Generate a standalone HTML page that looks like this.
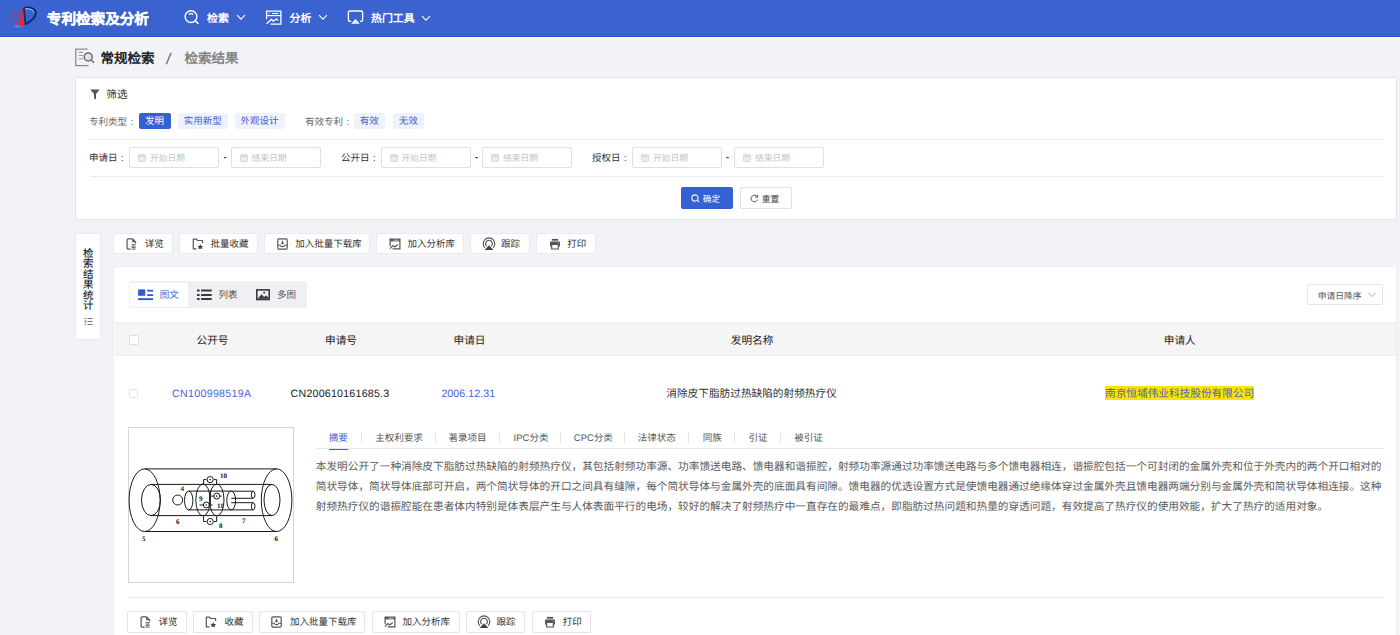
<!DOCTYPE html>
<html lang="zh-CN"><head><meta charset="utf-8">
<style>
*{box-sizing:border-box;margin:0;padding:0}
html,body{width:1400px;height:635px;overflow:hidden}
body{position:relative;text-rendering:geometricPrecision;background:#f2f3f7;font-family:"Liberation Sans",sans-serif;color:#333}
.a{position:absolute}
.t{position:absolute;white-space:nowrap;line-height:1}
#hdr{left:0;top:0;width:1400px;height:37px;background:#3a63d0;border-bottom:1px solid #2f58c9}
.nav{color:#fff;font-weight:bold;font-size:10.9px}
.card{position:absolute;background:#fff;border:1px solid #e4e6ec;border-radius:3px}
.lbl{font-size:9.5px;color:#666}
.lbl2{font-size:9.5px;color:#333}
.tag{position:absolute;height:16px;top:113px;border-radius:2px;background:#edf2fd;color:#3a63d0;font-size:9.5px;line-height:17.4px;text-align:center}
.tag.on{background:#3560d4;color:#fff}
.hr{position:absolute;height:1px;background:#ebedf2}
.inp{position:absolute;top:147px;width:90px;height:21px;border:1px solid #dcdfe6;border-radius:2px;background:#fff}
.inp .ph{position:absolute;left:20px;top:5.5px;font-size:8.75px;color:#c0c4cc;line-height:1;white-space:nowrap}
.inp svg{position:absolute;left:8px;top:6px}
.dash{position:absolute;top:152px;font-size:9px;color:#222;font-weight:bold}
.btn{position:absolute;height:21px;background:#fff;border:1px solid #e3e5ea;border-radius:2px;font-size:9.5px;color:#333}
.btn .tx{position:absolute;top:5px;line-height:1;white-space:nowrap}
.btn svg{position:absolute}
.cl{display:inline-block;width:9.5px;text-align:center}
.th{font-size:10.67px;color:#222}
.td{font-size:10.67px}
.tab{top:433.9px;font-size:9.5px;color:#555}
.sep{position:absolute;top:432px;width:1px;height:11px;background:#e2e4e8}
.abs{font-size:10.67px;line-height:20px;color:#5a5a5a;white-space:nowrap}
</style></head><body>

<!-- header -->
<div id="hdr" class="a">
 <svg class="a" style="left:5px;top:3px" width="36" height="28" viewBox="0 0 36 28">
  <ellipse cx="14" cy="23.3" rx="5" ry="1.4" fill="#9fc0f5" opacity=".3"/>
  <g fill="#ff2020"><circle cx="13" cy="7.3" r="0.8" opacity=".8"/><circle cx="8.8" cy="10.6" r="1.1"/><circle cx="12.8" cy="12.6" r="1.4"/><circle cx="6.4" cy="15.7" r="1.3"/><circle cx="11.5" cy="19.4" r="1.4"/></g>
  <path d="M17.4 3.2 L14.5 23.3 L18.8 23.3 Z" fill="#ff1e1e"/>
  <path d="M18.9 4.8 L20.6 21.8" stroke="#102a66" stroke-width="1.7"/>
  <path d="M19.6 4.6 C25 3.8 30.8 5.6 30.8 10 C30.8 14.2 25.5 18.5 20.8 21" fill="none" stroke="#10286a" stroke-width="2"/>
  <path d="M20.4 5.9 C24.5 5.3 28.6 6.6 29 9.6" fill="none" stroke="#c8d8fa" stroke-width="1"/>
 </svg>
 <div class="t" style="left:46.8px;top:12.5px;font-size:14.6px;font-weight:bold;color:#fff;-webkit-text-stroke:.3px #fff">专利检索及分析</div>

 <svg class="a" style="left:180px;top:8px" width="24" height="20" viewBox="0 0 24 20">
  <circle cx="11" cy="8.6" r="5.9" fill="none" stroke="#fff" stroke-width="1.4"/>
  <path d="M9 6.3 Q11 5 13 6.3" fill="none" stroke="#fff" stroke-width="1.1" stroke-linecap="round"/>
  <path d="M15.4 13 L18 15.4" stroke="#fff" stroke-width="1.5" stroke-linecap="round"/>
 </svg>
 <div class="t nav" style="left:207px;top:14px">检索</div>
 <svg class="a" style="left:235.5px;top:14px" width="10" height="7" viewBox="0 0 10 7"><path d="M1 1.2 L5 5.2 L9 1.2" fill="none" stroke="#fff" stroke-width="1.1"/></svg>

 <svg class="a" style="left:262px;top:8px" width="24" height="20" viewBox="0 0 24 20">
  <path d="M4.6 11.3 V3.1 H18.9 V16.2 H8.5" fill="none" stroke="#fff" stroke-width="1.3"/>
  <path d="M4.6 7.6 H18.9" stroke="#fff" stroke-width="1.2"/>
  <path d="M10 5.5 H16.4" stroke="#fff" stroke-width="1"/>
  <circle cx="7.2" cy="5.5" r=".5" fill="#fff"/>
  <path d="M5 15.4 L9.4 11.3 L11.3 13.2 L14.5 11 L15.7 12" fill="none" stroke="#fff" stroke-width="1.3" stroke-linecap="round" stroke-linejoin="round"/>
 </svg>
 <div class="t nav" style="left:289.5px;top:14px">分析</div>
 <svg class="a" style="left:317.5px;top:14px" width="10" height="7" viewBox="0 0 10 7"><path d="M1 1.2 L5 5.2 L9 1.2" fill="none" stroke="#fff" stroke-width="1.1"/></svg>

 <svg class="a" style="left:344px;top:8px" width="24" height="20" viewBox="0 0 24 20">
  <path d="M7.2 13.4 H6 Q4.4 13.4 4.4 11.8 V4.6 Q4.4 3 6 3 H17 Q18.6 3 18.6 4.6 V11.8 Q18.6 13.4 17 13.4 H16" fill="none" stroke="#fff" stroke-width="1.3"/>
  <path d="M11.5 11 L15.8 15.7 H7.2 Z" fill="#fff"/>
  <path d="M11.5 13.2 L12.3 14.3 H10.7 Z" fill="#3a63d0"/>
 </svg>
 <div class="t nav" style="left:371px;top:13.8px">热门工具</div>
 <svg class="a" style="left:420.5px;top:14.5px" width="10" height="7" viewBox="0 0 10 7"><path d="M1 1.2 L5 5.2 L9 1.2" fill="none" stroke="#fff" stroke-width="1.1"/></svg>
</div>
<div class="a" style="left:0;top:37px;width:1400px;height:1.6px;background:#f9fafc"></div>

<!-- breadcrumb -->
<svg class="a" style="left:74px;top:47px" width="22" height="20" viewBox="0 0 22 20">
 <path d="M13.6 2 H1.8 V18.5 H14.6" fill="none" stroke="#8c8c8c" stroke-width="1.25"/>
 <path d="M4.8 5.4 H9.1 M4.8 8.5 H9.1 M4.8 11.7 H9.1" stroke="#9a9a9a" stroke-width="1.1"/>
 <circle cx="14.2" cy="9.9" r="4" fill="#e2e2e4" stroke="#6f6f6f" stroke-width="1.5"/>
 <path d="M17 12.8 L20 15.8" stroke="#6f6f6f" stroke-width="1.6"/>
</svg>
<div class="t" style="left:100.5px;top:52.3px;font-size:13.5px;font-weight:bold;color:#222">常规检索</div>
<svg class="a" style="left:160px;top:48px" width="16" height="20" viewBox="0 0 16 20"><path d="M11 4.9 L6.3 16.2" stroke="#7a7a7a" stroke-width="1.5"/></svg>
<div class="t" style="left:184.4px;top:52.3px;font-size:13.5px;color:#858585;font-weight:bold">检索结果</div>

<!-- filter card -->
<div class="card" style="left:75.2px;top:77.2px;width:1321.8px;height:143px"></div>
<svg class="a" style="left:89.5px;top:88.5px" width="10" height="11" viewBox="0 0 10 11"><path d="M0.3 0.5 H9.7 L6 5 V10.5 L4 9.3 V5 Z" fill="#555"/></svg>
<div class="t" style="left:106.3px;top:90.2px;font-size:10.67px;color:#333">筛选</div>

<div class="t lbl" style="left:89px;top:117.9px">专利类型<span class="cl">:</span></div>
<div class="tag on" style="left:138.5px;width:32px">发明</div>
<div class="tag" style="left:177.5px;width:50.5px">实用新型</div>
<div class="tag" style="left:234.5px;width:50px">外观设计</div>
<div class="t lbl" style="left:305px;top:117.9px">有效专利<span class="cl">:</span></div>
<div class="tag" style="left:353.5px;width:31.5px">有效</div>
<div class="tag" style="left:392.5px;width:31.5px">无效</div>
<div class="hr" style="left:89.5px;top:139px;width:1293px"></div>

<div class="t lbl2" style="left:89px;top:153.7px">申请日<span class="cl">:</span></div>
<div class="inp" style="left:129px"><svg width="8" height="8" viewBox="0 0 8 8"><rect x=".6" y=".6" width="6.8" height="6.8" rx=".8" fill="#eeeff2" stroke="#cfd1d6" stroke-width=".9"/><path d="M.6 2.4H7.4" stroke="#cfd1d6" stroke-width="1.1"/></svg><span class="ph">开始日期</span></div>
<div class="dash" style="left:223.5px">-</div>
<div class="inp" style="left:230.5px"><svg width="8" height="8" viewBox="0 0 8 8"><rect x=".6" y=".6" width="6.8" height="6.8" rx=".8" fill="#eeeff2" stroke="#cfd1d6" stroke-width=".9"/><path d="M.6 2.4H7.4" stroke="#cfd1d6" stroke-width="1.1"/></svg><span class="ph">结束日期</span></div>
<div class="t lbl2" style="left:341px;top:153.7px">公开日<span class="cl">:</span></div>
<div class="inp" style="left:380.5px"><svg width="8" height="8" viewBox="0 0 8 8"><rect x=".6" y=".6" width="6.8" height="6.8" rx=".8" fill="#eeeff2" stroke="#cfd1d6" stroke-width=".9"/><path d="M.6 2.4H7.4" stroke="#cfd1d6" stroke-width="1.1"/></svg><span class="ph">开始日期</span></div>
<div class="dash" style="left:475px">-</div>
<div class="inp" style="left:482px"><svg width="8" height="8" viewBox="0 0 8 8"><rect x=".6" y=".6" width="6.8" height="6.8" rx=".8" fill="#eeeff2" stroke="#cfd1d6" stroke-width=".9"/><path d="M.6 2.4H7.4" stroke="#cfd1d6" stroke-width="1.1"/></svg><span class="ph">结束日期</span></div>
<div class="t lbl2" style="left:592px;top:153.7px">授权日<span class="cl">:</span></div>
<div class="inp" style="left:632px"><svg width="8" height="8" viewBox="0 0 8 8"><rect x=".6" y=".6" width="6.8" height="6.8" rx=".8" fill="#eeeff2" stroke="#cfd1d6" stroke-width=".9"/><path d="M.6 2.4H7.4" stroke="#cfd1d6" stroke-width="1.1"/></svg><span class="ph">开始日期</span></div>
<div class="dash" style="left:726px">-</div>
<div class="inp" style="left:734px"><svg width="8" height="8" viewBox="0 0 8 8"><rect x=".6" y=".6" width="6.8" height="6.8" rx=".8" fill="#eeeff2" stroke="#cfd1d6" stroke-width=".9"/><path d="M.6 2.4H7.4" stroke="#cfd1d6" stroke-width="1.1"/></svg><span class="ph">结束日期</span></div>
<div class="hr" style="left:89.5px;top:176px;width:1293px"></div>

<div class="a" style="left:681px;top:187px;width:52px;height:21.5px;background:#3560d4;border-radius:2px"></div>
<svg class="a" style="left:690.5px;top:194px" width="9" height="9" viewBox="0 0 9 9"><circle cx="4" cy="4" r="3.1" fill="none" stroke="#fff" stroke-width="1.1"/><path d="M6.2 6.2 L8.2 8.2" stroke="#fff" stroke-width="1.1"/></svg>
<div class="t" style="left:702.7px;top:194.9px;font-size:8.75px;color:#fff">确定</div>
<div class="a" style="left:740px;top:187px;width:51.5px;height:21.5px;background:#fff;border:1px solid #dcdfe6;border-radius:2px"></div>
<svg class="a" style="left:750px;top:194px" width="9" height="9" viewBox="0 0 9 9"><path d="M7.3 3 A3.3 3.3 0 1 0 7.5 5.6" fill="none" stroke="#555" stroke-width="1"/><path d="M7.6 0.8 V3.2 H5.3" fill="none" stroke="#555" stroke-width="1"/></svg>
<div class="t" style="left:761.7px;top:194.9px;font-size:8.75px;color:#444">重置</div>

<!-- side tab -->
<div class="card" style="left:75.2px;top:232.5px;width:25.6px;height:107px;border-color:#e8eaef"></div>
<div class="a" style="left:83px;top:248.5px;width:12px;font-size:10.5px;line-height:10.5px;color:#111;-webkit-text-stroke:.1px #111">检<br>索<br>结<br>果<br>统<br>计</div>
<svg class="a" style="left:83.5px;top:316.5px" width="9" height="9" viewBox="0 0 9 9"><path d="M3.5 1.5H8.5M3.5 4.5H8.5M3.5 7.5H8.5M0.5 1.5H2M0.5 7.5H2M2.5 3 L0.6 4.5 L2.5 6" fill="none" stroke="#777" stroke-width="1"/></svg>

<!-- toolbar -->
<!--TB1-->
<div class="a" style="left:113.2px;top:232.6px;width:59.800000000000004px;height:21.6px;background:#fff;border:1px solid #e9ebf0;border-radius:2px"></div>
<div class="a" style="left:126.0px;top:237.79999999999998px;line-height:0"><svg width="11" height="12" viewBox="0 0 11 12"><path d="M4.6 11.1 H2.2 Q1.1 11.1 1.1 10 V2 Q1.1 0.9 2.2 0.9 H6.4 L9.6 4.1 V5.4" fill="none" stroke="#555" stroke-width="1.2"/><path d="M6.2 0.9 L9.6 4.3 H6.2 Z" fill="#555"/><path d="M5.6 6.6 H9.6 M5.6 8.1 H9.6 M5.6 9.6 H9.6 M5.6 11.1 H9.6" stroke="#666" stroke-width="1"/></svg></div>
<div class="t" style="left:144.8px;top:240.2px;font-size:9.5px;color:#333">详览</div>
<div class="a" style="left:178.95px;top:232.6px;width:78.7px;height:21.6px;background:#fff;border:1px solid #e9ebf0;border-radius:2px"></div>
<div class="a" style="left:191.6px;top:237.79999999999998px;line-height:0"><svg width="12" height="12" viewBox="0 0 12 12"><path d="M4.5 10.9 H1.3 V1.2 H4.4 L5.6 2.5 H10.6 V5" fill="none" stroke="#555" stroke-width="1.2" stroke-linejoin="round"/><path d="M8.3 6.2 L9.3 8 L11.1 8.3 L9.8 9.6 L10.1 11.3 L8.3 10.5 L6.5 11.3 L6.8 9.6 L5.5 8.3 L7.3 8 Z" fill="#444"/></svg></div>
<div class="t" style="left:210.4px;top:240.2px;font-size:9.5px;color:#333">批量收藏</div>
<div class="a" style="left:263.7px;top:232.6px;width:106.2px;height:21.6px;background:#fff;border:1px solid #e9ebf0;border-radius:2px"></div>
<div class="a" style="left:276.5px;top:237.79999999999998px;line-height:0"><svg width="11" height="12" viewBox="0 0 11 12"><rect x="0.8" y="0.9" width="9.4" height="10.2" rx="1.2" fill="none" stroke="#555" stroke-width="1.2"/><path d="M0.8 7.3 H3.3 Q3.6 8.6 5.5 8.6 Q7.4 8.6 7.7 7.3 H10.2" fill="none" stroke="#555" stroke-width="1.1"/><path d="M5.5 2.8 V5.2" stroke="#555" stroke-width="1.2"/><path d="M3.6 4.8 L5.5 6.8 L7.4 4.8 Z" fill="#555"/></svg></div>
<div class="t" style="left:295.2px;top:240.2px;font-size:9.5px;color:#333">加入批量下载库</div>
<div class="a" style="left:376.09999999999997px;top:232.6px;width:87.7px;height:21.6px;background:#fff;border:1px solid #e9ebf0;border-radius:2px"></div>
<div class="a" style="left:388.5px;top:237.79999999999998px;line-height:0"><svg width="12" height="12" viewBox="0 0 12 12"><path d="M1.1 8.2 V1 H10.9 V10.9 H3.6" fill="none" stroke="#555" stroke-width="1.2"/><rect x="1.1" y="1" width="9.8" height="2.4" fill="#555"/><path d="M4.6 2.2 H9.4" stroke="#e6e6e6" stroke-width=".8"/><path d="M0.9 10.6 L3.8 7.6 L5.6 8.9 L8.8 6.4" fill="none" stroke="#555" stroke-width="1.25" stroke-linejoin="round"/></svg></div>
<div class="t" style="left:407.4px;top:240.2px;font-size:9.5px;color:#333">加入分析库</div>
<div class="a" style="left:470.0px;top:232.6px;width:59.800000000000004px;height:21.6px;background:#fff;border:1px solid #e9ebf0;border-radius:2px"></div>
<div class="a" style="left:481.5px;top:237.2px;line-height:0"><svg width="14" height="14" viewBox="0 0 14 14"><path d="M3 10.9 A5.8 5.8 0 1 1 11 10.9" fill="none" stroke="#555" stroke-width="1.15"/><path d="M4.7 9.2 A3.4 3.4 0 1 1 9.3 9.2" fill="none" stroke="#555" stroke-width="1.15"/><path d="M7 8.3 L11.4 13 H2.6 Z" fill="#444"/></svg></div>
<div class="t" style="left:501.1px;top:240.2px;font-size:9.5px;color:#333">跟踪</div>
<div class="a" style="left:535.8000000000001px;top:232.6px;width:60.0px;height:21.6px;background:#fff;border:1px solid #e9ebf0;border-radius:2px"></div>
<div class="a" style="left:548.6px;top:237.79999999999998px;line-height:0"><svg width="12" height="12" viewBox="0 0 12 12"><rect x="2.8" y="0.9" width="6.4" height="1.8" fill="#555"/><path d="M1.6 3.6 H10.4 Q11 3.6 11 4.2 V8.4 H9.3 V7 H2.7 V8.4 H1 V4.2 Q1 3.6 1.6 3.6 Z" fill="#555"/><circle cx="9.3" cy="5" r=".6" fill="#ddd"/><path d="M2.7 7.2 V11 H9.3 V7.2" fill="none" stroke="#555" stroke-width="1.2"/></svg></div>
<div class="t" style="left:567.2px;top:240.2px;font-size:9.5px;color:#333">打印</div>
<!--/TB1-->


<!-- results card -->
<div class="card" style="left:113.2px;top:266.2px;width:1284px;height:380px;border-color:#eceef2;border-radius:2px"></div>
<!--RES-->
<div class="a" style="left:128.7px;top:281.3px;width:178px;height:26.5px;background:#eef0f4;border-radius:2px"></div>
<div class="a" style="left:129.8px;top:282.8px;width:58.2px;height:24.2px;background:#fff;border-radius:1px"></div>
<svg class="a" style="left:138px;top:289px" width="16" height="12" viewBox="0 0 16 12"><rect x="0.1" y="0.4" width="7.1" height="6.4" fill="#3058d5"/><rect x="9.2" y="0.8" width="5.9" height="1.8" fill="#3058d5"/><rect x="9.2" y="5.2" width="5.9" height="1.8" fill="#3058d5"/><rect x="0.1" y="9.2" width="15" height="1.9" fill="#3058d5"/></svg>
<div class="t" style="left:159.7px;top:291px;font-size:9.5px;color:#3a63d0">图文</div>
<svg class="a" style="left:197px;top:289px" width="15" height="12" viewBox="0 0 15 12"><path d="M0 1.4H2.6M0 5.9H2.6M0 10H2.6M4.1 1.4H14.7M4.1 5.9H14.7M4.1 10H14.7" stroke="#3a3a3a" stroke-width="2"/></svg>
<div class="t" style="left:218.4px;top:291px;font-size:9.5px;color:#555">列表</div>
<svg class="a" style="left:256px;top:289px" width="14" height="12" viewBox="0 0 14 12"><rect x="0.8" y="0.9" width="12.4" height="9.6" fill="none" stroke="#3a3a3a" stroke-width="1.6"/><path d="M1.6 9.8 L5.6 5.2 L8 8 L10.2 6.6 L12.4 8.5 V9.8 Z" fill="#3a3a3a"/><circle cx="8.2" cy="3.8" r="1" fill="#3a3a3a"/></svg>
<div class="t" style="left:277px;top:291px;font-size:9.5px;color:#555">多图</div>

<div class="a" style="left:1307px;top:284.2px;width:76px;height:21px;background:#fff;border:1px solid #e2e5eb;border-radius:2px"></div>
<div class="t" style="left:1317.8px;top:291.5px;font-size:8.75px;color:#555">申请日降序</div>
<svg class="a" style="left:1367.8px;top:291.8px" width="8" height="6" viewBox="0 0 8 6"><path d="M0.6 1 L3.9 4.6 L7.2 1" fill="none" stroke="#aaa" stroke-width="0.9"/></svg>

<div class="a" style="left:114.5px;top:322.3px;width:1281.5px;height:34px;background:#f5f5f6;border-top:1px solid #ebedf1;border-bottom:1px solid #ebedf1"></div>
<div class="a" style="left:129.1px;top:335.4px;width:9.8px;height:9.6px;background:#fff;border:1px solid #dcdfe6;border-radius:1.5px"></div>
<div class="t th" style="left:196.5px;top:336px">公开号</div>
<div class="t th" style="left:325px;top:336px">申请号</div>
<div class="t th" style="left:453.5px;top:336px">申请日</div>
<div class="t th" style="left:730.8px;top:336px">发明名称</div>
<div class="t th" style="left:1163.8px;top:336px">申请人</div>

<div class="a" style="left:128.6px;top:388.6px;width:9.2px;height:9.2px;background:#fff;border:1px solid #e0e2e8;border-radius:1.5px"></div>
<div class="t td" style="left:172px;top:388.5px;color:#3f66d2;letter-spacing:.3px">CN100998519A</div>
<div class="t td" style="left:290.6px;top:388.5px;color:#222;letter-spacing:.21px">CN200610161685.3</div>
<div class="t td" style="left:441.4px;top:388.5px;color:#3f66d2;letter-spacing:.05px">2006.12.31</div>
<div class="t td" style="left:666.3px;top:389px;color:#333">消除皮下脂肪过热缺陷的射频热疗仪</div>
<div class="a" style="left:1105px;top:385.8px;width:149.3px;height:14.3px;background:#ffe400"></div>
<div class="t td" style="left:1105px;top:389px;color:#4a64c0">南京恒埔伟业科技股份有限公司</div>

<div class="a" style="left:128px;top:427.3px;width:165.6px;height:155.3px;background:#fff;border:1px solid #d6d6d6"></div>
<svg class="a" style="left:128px;top:427.3px" width="166" height="156" viewBox="0 0 166 156">
 <g fill="none" stroke="#1a1a1a" stroke-width="1">
  <ellipse cx="16.6" cy="73.2" rx="15.5" ry="31.3"/>
  <ellipse cx="148.6" cy="73.2" rx="15.3" ry="31.3"/>
  <path d="M16.6 41.9 H148.6 M16.6 104.5 H148.6"/>
  <ellipse cx="23" cy="73" rx="9.5" ry="15.6"/>
  <ellipse cx="144" cy="73" rx="8" ry="15.6"/>
  <path d="M23 57.4 H144 M23 88.6 H144"/>
  <circle cx="49.7" cy="73" r="5"/>
  <ellipse cx="60.7" cy="73.5" rx="4.2" ry="9.4"/>
  <path d="M60.7 64.1 H103 M60.7 82.9 H103"/>
  <ellipse cx="75" cy="73" rx="7.2" ry="16"/>
  <ellipse cx="88.8" cy="73" rx="7.2" ry="16"/>
  <ellipse cx="103.2" cy="73.5" rx="4.4" ry="9.4"/>
  <path d="M103.2 64.2 H125.2 M103.2 71.3 H125.2 M103.2 75.7 H125.2 M103.2 82.9 H125.2"/>
  <ellipse cx="125.2" cy="67.7" rx="1.8" ry="3.5"/>
  <ellipse cx="125.2" cy="79.3" rx="1.8" ry="3.5"/>
  <path d="M75.6 57.2 V52.6 H78.5 M86 52.6 H88.6 V57.2"/>
  <circle cx="82.2" cy="52.6" r="3.1"/>
  <path d="M75.6 89.5 V94.5 H78.5 M86 94.5 H88.6 V89.5"/>
  <circle cx="82.2" cy="94.5" r="3.1"/>
  <path d="M82.2 64 V78"/>
  <circle cx="78.3" cy="78" r="3"/>
  <path d="M71.5 78 H75.3 M81.3 78 H84.5"/>
  <circle cx="88.8" cy="69.1" r="3"/>
  <path d="M82.2 69.1 H85.8 M91.8 69.1 H93.6"/>
  <g fill="#1a1a1a" stroke="none"><circle cx="82.2" cy="52.6" r=".8"/><circle cx="82.2" cy="94.5" r=".8"/><circle cx="78.3" cy="78" r=".8"/><circle cx="88.8" cy="69.1" r=".8"/></g>
 </g>
 <g fill="#111" font-family="Liberation Serif,serif" font-size="7" font-weight="bold">
  <text x="92" y="50.5">10</text><text x="52.5" y="64">4</text><text x="71" y="74">9</text><text x="89" y="80.5">11</text>
  <text x="48" y="97">6</text><text x="91" y="101">8</text><text x="114" y="96">7</text><text x="14" y="113.5">5</text><text x="146.5" y="113.5">6</text>
 </g>
</svg>

<div class="t tab" style="left:328.8px;color:#3560d4">摘要</div>
<div class="a" style="left:328.8px;top:447.8px;width:19.2px;height:2px;background:#3560d4"></div>
<div class="t tab" style="left:375.2px">主权利要求</div>
<div class="t tab" style="left:448.6px">著录项目</div>
<div class="t tab" style="left:513.6px">IPC分类</div>
<div class="t tab" style="left:573.8px">CPC分类</div>
<div class="t tab" style="left:637.8px">法律状态</div>
<div class="t tab" style="left:702.7px">同族</div>
<div class="t tab" style="left:748.5px">引证</div>
<div class="t tab" style="left:794.2px">被引证</div>
<div class="sep" style="left:360.5px"></div><div class="sep" style="left:434.6px"></div><div class="sep" style="left:499.2px"></div><div class="sep" style="left:560.2px"></div>
<div class="sep" style="left:623.7px"></div><div class="sep" style="left:688.2px"></div><div class="sep" style="left:733.9px"></div><div class="sep" style="left:780.3px"></div>
<div class="hr" style="left:315.8px;top:448px;width:1068.5px;background:#e6e8ee"></div>

<div class="a abs" style="left:315.8px;top:456.5px;width:1070px">本发明公开了一种消除皮下脂肪过热缺陷的射频热疗仪，其包括射频功率源、功率馈送电路、馈电器和谐振腔，射频功率源通过功率馈送电路与多个馈电器相连，谐振腔包括一个可封闭的金属外壳和位于外壳内的两个开口相对的<br>简状导体，简状导体底部可开启，两个简状导体的开口之间具有缝隙，每个简状导体与金属外壳的底面具有间隙。馈电器的优选设置方式是使馈电器通过绝缘体穿过金属外壳且馈电器两端分别与金属外壳和简状导体相连接。这种<br>射频热疗仪的谐振腔能在患者体内特别是体表层产生与人体表面平行的电场，较好的解决了射频热疗中一直存在的最难点，即脂肪过热问题和热量的穿透问题，有效提高了热疗仪的使用效能，扩大了热疗的适用对象。</div>

<div class="hr" style="left:128px;top:597.3px;width:1256px;background:#e6e7ea"></div>
<!--/RES-->
<!--TB2-->
<div class="a" style="left:127.2px;top:610.8px;width:59.800000000000004px;height:22.400000000000002px;background:#fff;border:1px solid #e2e4e9;border-radius:2px"></div>
<div class="a" style="left:140.0px;top:616.0px;line-height:0"><svg width="11" height="12" viewBox="0 0 11 12"><path d="M4.6 11.1 H2.2 Q1.1 11.1 1.1 10 V2 Q1.1 0.9 2.2 0.9 H6.4 L9.6 4.1 V5.4" fill="none" stroke="#555" stroke-width="1.2"/><path d="M6.2 0.9 L9.6 4.3 H6.2 Z" fill="#555"/><path d="M5.6 6.6 H9.6 M5.6 8.1 H9.6 M5.6 9.6 H9.6 M5.6 11.1 H9.6" stroke="#666" stroke-width="1"/></svg></div>
<div class="t" style="left:158.4px;top:618.4px;font-size:9.5px;color:#333">详览</div>
<div class="a" style="left:193.29999999999998px;top:610.8px;width:59.800000000000004px;height:22.400000000000002px;background:#fff;border:1px solid #e2e4e9;border-radius:2px"></div>
<div class="a" style="left:205.2px;top:616.0px;line-height:0"><svg width="12" height="12" viewBox="0 0 12 12"><path d="M4.5 10.9 H1.3 V1.2 H4.4 L5.6 2.5 H10.6 V5" fill="none" stroke="#555" stroke-width="1.2" stroke-linejoin="round"/><path d="M8.3 6.2 L9.3 8 L11.1 8.3 L9.8 9.6 L10.1 11.3 L8.3 10.5 L6.5 11.3 L6.8 9.6 L5.5 8.3 L7.3 8 Z" fill="#444"/></svg></div>
<div class="t" style="left:224.5px;top:618.4px;font-size:9.5px;color:#333">收藏</div>
<div class="a" style="left:258.8px;top:610.8px;width:106.60000000000001px;height:22.400000000000002px;background:#fff;border:1px solid #e2e4e9;border-radius:2px"></div>
<div class="a" style="left:271.3px;top:616.0px;line-height:0"><svg width="11" height="12" viewBox="0 0 11 12"><rect x="0.8" y="0.9" width="9.4" height="10.2" rx="1.2" fill="none" stroke="#555" stroke-width="1.2"/><path d="M0.8 7.3 H3.3 Q3.6 8.6 5.5 8.6 Q7.4 8.6 7.7 7.3 H10.2" fill="none" stroke="#555" stroke-width="1.1"/><path d="M5.5 2.8 V5.2" stroke="#555" stroke-width="1.2"/><path d="M3.6 4.8 L5.5 6.8 L7.4 4.8 Z" fill="#555"/></svg></div>
<div class="t" style="left:290px;top:618.4px;font-size:9.5px;color:#333">加入批量下载库</div>
<div class="a" style="left:371.5px;top:610.8px;width:88.0px;height:22.400000000000002px;background:#fff;border:1px solid #e2e4e9;border-radius:2px"></div>
<div class="a" style="left:383.5px;top:616.0px;line-height:0"><svg width="12" height="12" viewBox="0 0 12 12"><path d="M1.1 8.2 V1 H10.9 V10.9 H3.6" fill="none" stroke="#555" stroke-width="1.2"/><rect x="1.1" y="1" width="9.8" height="2.4" fill="#555"/><path d="M4.6 2.2 H9.4" stroke="#e6e6e6" stroke-width=".8"/><path d="M0.9 10.6 L3.8 7.6 L5.6 8.9 L8.8 6.4" fill="none" stroke="#555" stroke-width="1.25" stroke-linejoin="round"/></svg></div>
<div class="t" style="left:402.5px;top:618.4px;font-size:9.5px;color:#333">加入分析库</div>
<div class="a" style="left:465.5px;top:610.8px;width:59.800000000000004px;height:22.400000000000002px;background:#fff;border:1px solid #e2e4e9;border-radius:2px"></div>
<div class="a" style="left:476.9px;top:615.4px;line-height:0"><svg width="14" height="14" viewBox="0 0 14 14"><path d="M3 10.9 A5.8 5.8 0 1 1 11 10.9" fill="none" stroke="#555" stroke-width="1.15"/><path d="M4.7 9.2 A3.4 3.4 0 1 1 9.3 9.2" fill="none" stroke="#555" stroke-width="1.15"/><path d="M7 8.3 L11.4 13 H2.6 Z" fill="#444"/></svg></div>
<div class="t" style="left:496.6px;top:618.4px;font-size:9.5px;color:#333">跟踪</div>
<div class="a" style="left:531.5px;top:610.8px;width:59.5px;height:22.400000000000002px;background:#fff;border:1px solid #e2e4e9;border-radius:2px"></div>
<div class="a" style="left:543.8px;top:616.0px;line-height:0"><svg width="12" height="12" viewBox="0 0 12 12"><rect x="2.8" y="0.9" width="6.4" height="1.8" fill="#555"/><path d="M1.6 3.6 H10.4 Q11 3.6 11 4.2 V8.4 H9.3 V7 H2.7 V8.4 H1 V4.2 Q1 3.6 1.6 3.6 Z" fill="#555"/><circle cx="9.3" cy="5" r=".6" fill="#ddd"/><path d="M2.7 7.2 V11 H9.3 V7.2" fill="none" stroke="#555" stroke-width="1.2"/></svg></div>
<div class="t" style="left:562.8px;top:618.4px;font-size:9.5px;color:#333">打印</div>
<!--/TB2-->


</body></html>
